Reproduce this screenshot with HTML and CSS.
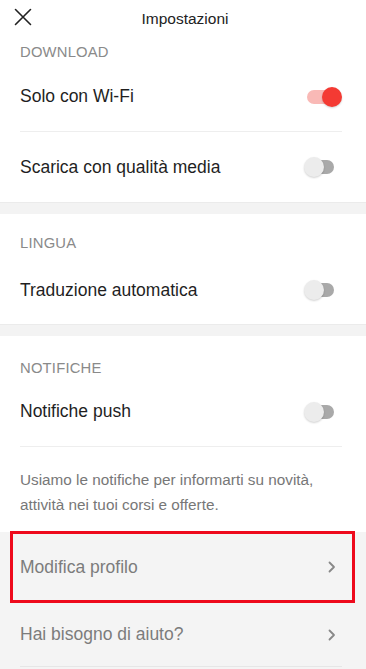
FILE: index.html
```html
<!DOCTYPE html>
<html lang="it">
<head>
<meta charset="utf-8">
<title>Impostazioni</title>
<link rel="stylesheet" href="styles.css">
</head>
<body>
<div class="screen">
  <header class="topbar">
    <svg class="close" width="18" height="18" viewBox="0 0 18 18"><path d="M1.5 1.5 L16.5 16.5 M16.5 1.5 L1.5 16.5" stroke="#222" stroke-width="1.6" fill="none" stroke-linecap="round"/></svg>
    <h1 class="title">Impostazioni</h1>
  </header>

  <section class="group first">
    <div class="label">DOWNLOAD</div>
    <div class="row">
      <span class="row-text">Solo con Wi-Fi</span>
      <span class="switch on"><span class="track"></span><span class="thumb"></span></span>
    </div>
    <div class="row last">
      <span class="row-text">Scarica con qualità media</span>
      <span class="switch"><span class="track"></span><span class="thumb"></span></span>
    </div>
  </section>
  <div class="band"></div>

  <section class="group second">
    <div class="label">LINGUA</div>
    <div class="row last">
      <span class="row-text">Traduzione automatica</span>
      <span class="switch"><span class="track"></span><span class="thumb"></span></span>
    </div>
  </section>
  <div class="band"></div>

  <section class="group third">
    <div class="label">NOTIFICHE</div>
    <div class="row">
      <span class="row-text">Notifiche push</span>
      <span class="switch"><span class="track"></span><span class="thumb"></span></span>
    </div>
    <p class="note">Usiamo le notifiche per informarti su novità, attività nei tuoi corsi e offerte.</p>
  </section>

  <section class="links">
    <div class="link-row tall">
      <span class="link-text">Modifica profilo</span>
      <svg class="chev" width="8" height="12" viewBox="0 0 8 12"><path d="M1.5 1.5 L6 6 L1.5 10.5" stroke="#888" stroke-width="1.8" fill="none" stroke-linecap="round" stroke-linejoin="round"/></svg>
      <div class="highlight"></div>
    </div>
    <div class="link-row">
      <span class="link-text">Hai bisogno di aiuto?</span>
      <svg class="chev" width="8" height="12" viewBox="0 0 8 12"><path d="M1.5 1.5 L6 6 L1.5 10.5" stroke="#888" stroke-width="1.8" fill="none" stroke-linecap="round" stroke-linejoin="round"/></svg>
    </div>
  </section>
</div>
</body>
</html>
```

FILE: styles.css
```css
* { box-sizing: border-box; }
html, body { margin: 0; padding: 0; }
body {
  font-family: "Liberation Sans", Arial, sans-serif;
  background: #fff;
  color: #222;
  width: 366px;
  height: 669px;
  overflow: hidden;
}
.screen { display: flex; flex-direction: column; }

.topbar {
  height: 38px;
  display: flex;
  align-items: center;
  justify-content: center;
  position: relative;
}
.close { position: absolute; left: 14px; top: 8px; }
.title {
  margin: 0;
  font-size: 15.5px;
  font-weight: normal;
  color: #222;
  padding-left: 4px;
}

.group { padding: 0 24px 0 20px; }
.label {
  font-size: 14.8px;
  color: #8a8a8a;
  line-height: 18px;
  letter-spacing: 0.2px;
}
.group.first .label { padding-top: 5px; }
.group.first .label + .row { margin-top: 1px; }
.group.second .label { padding-top: 20px; }
.group.second .label + .row { margin-top: 4px; height: 68px; }
.group.third .label { padding-top: 23px; }

.row {
  height: 70px;
  display: flex;
  align-items: center;
  justify-content: space-between;
  border-bottom: 1px solid #eeeeee;
}
.row.last { border-bottom: none; }
.row-text { font-size: 17.5px; color: #1f1f1f; }

.switch {
  position: relative;
  width: 38px;
  height: 20px;
  display: block;
}
.track {
  position: absolute;
  left: 3px;
  top: 3px;
  width: 27px;
  height: 14px;
  border-radius: 7px;
  background: #a9a9a9;
}
.thumb {
  position: absolute;
  left: 0;
  top: 0;
  width: 20px;
  height: 20px;
  border-radius: 50%;
  background: #ececec;
  box-shadow: 0 1px 2px rgba(0,0,0,0.18);
}
.switch.on .track { background: #f9b9b6; }
.switch.on .thumb { left: 18px; background: #f43a33; }

.band {
  height: 12px;
  background: #f3f3f3;
  border-top: 1px solid #ebebeb;
}

.note {
  margin: 0;
  padding: 20px 0 15px;
  font-size: 15.3px;
  line-height: 25px;
  color: #777;
}

.links {
  background: #f4f4f4;
  padding: 0 24px 0 20px;
  flex: 1;
  min-height: 140px;
}
.link-row {
  position: relative;
  height: 64px;
  display: flex;
  align-items: center;
  justify-content: space-between;
  border-bottom: 1px solid #e6e6e6;
}
.link-row.tall { height: 71px; }
.link-text { font-size: 17.5px; color: #7c7c7c; }
.chev { margin-right: 6px; }
.highlight {
  position: absolute;
  left: -10px;
  right: -13px;
  top: -1px;
  bottom: -1px;
  border: 3px solid #ee0a1c;
  pointer-events: none;
}
```
